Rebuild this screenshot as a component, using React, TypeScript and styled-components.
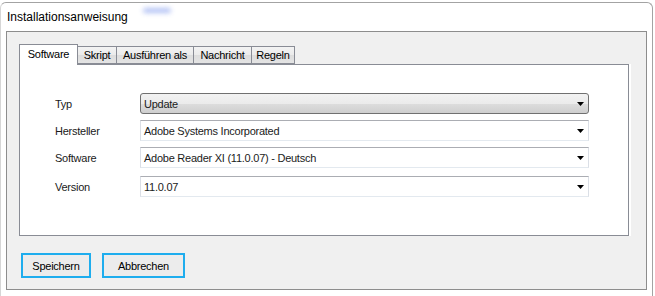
import styled, { createGlobalStyle } from "styled-components";

const GlobalStyle = createGlobalStyle`
	html, body {
		margin: 0;
		padding: 0;
		background: #ffffff;
	}
	body {
		font-family: "Liberation Sans", Arial, sans-serif;
		font-size: 11px;
		color: #000;
	}
	* {
		box-sizing: border-box;
	}
`;

type TabDef = { label: string; width: number };

const tabs: TabDef[] = [
	{ label: "Software", width: 59 },
	{ label: "Skript", width: 40 },
	{ label: "Ausführen als", width: 78 },
	{ label: "Nachricht", width: 59 },
	{ label: "Regeln", width: 44 },
];

const fields = [
	{ label: "Typ", value: "Update", kind: "button" as const },
	{ label: "Hersteller", value: "Adobe Systems Incorporated", kind: "edit" as const },
	{ label: "Software", value: "Adobe Reader XI (11.0.07) - Deutsch", kind: "edit" as const },
	{ label: "Version", value: "11.0.07", kind: "edit" as const },
];

const Arrow = () => (
	<ArrowIcon viewBox="0 0 7 4">
		<path d="M0 0h7L3.5 4z" fill="#000" />
	</ArrowIcon>
);

const App = () => {
	return (
		<>
			<GlobalStyle />
			<Frame>
				<TitleBar>
					<Title>Installationsanweisung</Title>
					<BlurredName />
				</TitleBar>
				<Client>
					<TabStrip>
						{tabs.map((t, i) => (
							<Tab key={t.label} $active={i === 0} $width={t.width}>
								{t.label}
							</Tab>
						))}
					</TabStrip>
					<Panel>
						<Form>
							{fields.map((f, i) => (
								<Row key={f.label} $spaced={i === fields.length - 1}>
									<Label>{f.label}</Label>
									<Combo $kind={f.kind}>
										<ComboText>{f.value}</ComboText>
										<Arrow />
									</Combo>
								</Row>
							))}
						</Form>
					</Panel>
					<ButtonRow>
						<Button $width={70}>Speichern</Button>
						<Button $width={83}>Abbrechen</Button>
					</ButtonRow>
				</Client>
			</Frame>
		</>
	);
};

export default App;

const Frame = styled.div`
	width: 653px;
	height: 294px;
	margin-top: 2px;
	border: 1px solid #a3a3a3;
	border-left-color: #d6d6d6;
	border-bottom: none;
	border-radius: 6px 6px 0 0;
	background: #ffffff;
	overflow: hidden;
`;

const TitleBar = styled.div`
	height: 28px;
	display: flex;
	align-items: center;
	padding-left: 6px;
	padding-bottom: 1px;
`;

const Title = styled.span`
	font-size: 12px;
	color: #000;
`;

const BlurredName = styled.span`
	width: 28px;
	height: 5px;
	margin-left: 15px;
	margin-bottom: 12px;
	background: #9fb2f2;
	border-radius: 3px;
	filter: blur(2.5px);
	opacity: 0.8;
`;

const Client = styled.div`
	width: 641px;
	height: 259px;
	margin-left: 5px;
	border: 1px solid #8d8d8d;
	background: #f0f0f0;
	padding: 12px 0 0 12px;
	letter-spacing: -0.25px;
`;

const TabStrip = styled.div`
	display: flex;
	align-items: flex-start;
	height: 20px;
	position: relative;
	z-index: 1;
`;

const Tab = styled.div<{ $active: boolean; $width: number }>`
	width: ${(p) => p.$width}px;
	height: ${(p) => (p.$active ? 21 : 18)}px;
	margin-top: ${(p) => (p.$active ? 0 : 2)}px;
	margin-left: -1px;
	&:first-child {
		margin-left: 0;
	}
	border: 1px solid #898c95;
	border-bottom: ${(p) => (p.$active ? "none" : "1px solid #898c95")};
	background: ${(p) =>
		p.$active ? "#ffffff" : "linear-gradient(#f3f3f3 0%, #ebebeb 50%, #dddddd 51%, #e4e4e4 100%)"};
	display: flex;
	align-items: center;
	justify-content: center;
	padding-bottom: ${(p) => (p.$active ? 3 : 0)}px;
	color: #000;
	white-space: nowrap;
	position: relative;
	z-index: ${(p) => (p.$active ? 2 : 1)};
`;

const Panel = styled.div`
	width: 610px;
	height: 172px;
	border: 1px solid #898c95;
	background: #ffffff;
	box-shadow: 2px 0 0 #ffffff;
`;

const Form = styled.div`
	display: flex;
	flex-direction: column;
	gap: 6px;
	padding: 28px 0 0 35px;
`;

const Row = styled.div<{ $spaced: boolean }>`
	display: grid;
	grid-template-columns: 85px 449px;
	align-items: center;
	margin-top: ${(p) => (p.$spaced ? 2 : 0)}px;
`;

const Label = styled.span`
	color: #1a1a1a;
	padding-top: 1px;
`;

const Combo = styled.div<{ $kind: "button" | "edit" }>`
	height: 21px;
	display: flex;
	align-items: center;
	justify-content: space-between;
	padding: 0 4px 0 3px;
	${(p) =>
		p.$kind === "button"
			? `
		border: 1px solid #707070;
		border-radius: 3px;
		background: linear-gradient(#f2f2f2 0%, #ebebeb 50%, #dddddd 51%, #cfcfcf 100%);
	`
			: `
		border: 1px solid #dbdfe6;
		border-top-color: #abadb3;
		border-bottom-color: #e3e9ef;
		background: #ffffff;
	`}
`;

const ComboText = styled.span`
	color: #1b1b1b;
	white-space: nowrap;
`;

const ArrowIcon = styled.svg`
	width: 7px;
	height: 4px;
	flex-shrink: 0;
	margin-top: 1px;
`;

const ButtonRow = styled.div`
	display: flex;
	gap: 11px;
	margin: 17px 0 0 2px;
`;

const Button = styled.button<{ $width: number }>`
	width: ${(p) => p.$width}px;
	height: 25px;
	border: 2px solid #1eadee;
	background: #ececec;
	font-family: "Liberation Sans", Arial, sans-serif;
	font-size: 11px;
	letter-spacing: -0.25px;
	color: #000;
	padding: 0;
	cursor: pointer;
`;
